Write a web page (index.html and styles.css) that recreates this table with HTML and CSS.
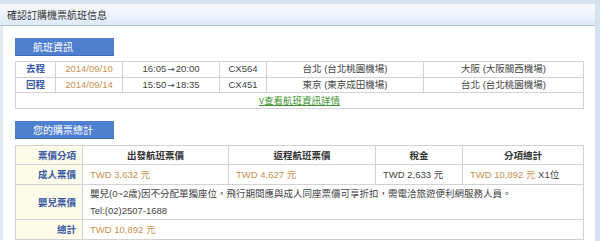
FILE: index.html
```html
<!DOCTYPE html>
<html lang="zh-TW">
<head>
<meta charset="utf-8">
<link rel="stylesheet" href="styles.css">
</head>
<body>
<div class="panel">
  <div class="panel-head">確認訂購機票航班信息</div>
  <div class="panel-body">
    <div class="tab">航班資訊</div>
    <table class="grid flights">
      <colgroup><col class="c1"><col class="c2"><col class="c3"><col class="c4"><col class="c5"><col class="c6"></colgroup>
      <tr>
        <td class="lbl">去程</td><td class="tan">2014/09/10</td><td>16:05<span class="arr">→</span>20:00</td><td>CX564</td><td>台北 (台北桃園機場)</td><td>大阪 (大阪關西機場)</td>
      </tr>
      <tr>
        <td class="lbl">回程</td><td class="tan">2014/09/14</td><td>15:50<span class="arr">→</span>18:35</td><td>CX451</td><td>東京 (東京成田機場)</td><td>台北 (台北桃園機場)</td>
      </tr>
      <tr class="linkrow"><td colspan="6"><a href="#" class="more">v查看航班資訊詳情</a></td></tr>
    </table>
    <div class="tab tab2">您的購票總計</div>
    <table class="grid prices">
      <colgroup><col class="p1"><col class="p2"><col class="p3"><col class="p4"><col class="p5"></colgroup>
      <tr class="hrow">
        <td class="side">票價分項</td><th>出發航班票價</th><th>返程航班票價</th><th>稅金</th><th>分項總計</th>
      </tr>
      <tr class="prow">
        <td class="side">成人票價</td><td class="tan">TWD 3,632 元</td><td class="tan">TWD 4,627 元</td><td>TWD 2,633 元</td><td><span class="tan">TWD 10,892 元</span> X1位</td>
      </tr>
      <tr class="irow">
        <td class="side">嬰兒票價</td>
        <td colspan="4" class="note">嬰兒(0~2歲)因不分配單獨座位<span class="cjk">，</span>飛行期間應與成人同座票價可享折扣<span class="cjk">，</span>需電洽旅遊便利網服務人員<span class="cjk">。</span><br>Tel:(02)2507-1688</td>
      </tr>
      <tr class="prow">
        <td class="side">總計</td><td colspan="4" class="tan">TWD 10,892 元</td>
      </tr>
    </table>
  </div>
</div>
</body>
</html>
```

FILE: styles.css
```css
html, body {
  margin: 0;
  padding: 0;
}
body {
  background: #d6e3ee;
  font-family: "Liberation Sans", "Noto Sans CJK TC", sans-serif;
  font-size: 9.5px;
  color: #444;
  height: 241px;
  overflow: hidden;
}
.panel {
  margin-top: 4px;
  width: 595px;
  background: #fff;
  height: 237px;
}
.panel-head {
  height: 22px;
  line-height: 20px;
  padding-left: 7px;
  font-size: 10px;
  color: #333;
  background: linear-gradient(#f8fbff, #dde9f8);
  border-bottom: 1px solid #b4c0cc;
  border-top: 1px solid #eef4fb;
  box-sizing: border-box;
  font-family: "Noto Sans CJK TC", sans-serif;
}
.panel-body {
  border-left: 3px solid #e2eaf2;
  padding: 12px 12px 0 12px;
}
.tab {
  width: 99px;
  height: 18px;
  line-height: 18px;
  padding-left: 18px;
  background: #4f80cf;
  border-bottom: 1px solid #3e6cb8;
  box-sizing: border-box;
  color: #fff;
  font-size: 10px;
  font-family: "Noto Sans CJK TC", sans-serif;
  margin-bottom: 5px;
}
.tab2 {
  margin-top: 12px;
  margin-bottom: 6px;
}
.grid {
  border-collapse: collapse;
  table-layout: fixed;
  width: 568px;
  border: 1px solid #c9c9c9;
}
.grid td, .grid th {
  border: 1px solid #d2d2d2;
  padding: 0;
  white-space: nowrap;
  overflow: hidden;
}
.c1 { width: 40px; }
.c2 { width: 67px; }
.c3 { width: 97px; }
.c4 { width: 47px; }
.c5 { width: 157px; }
.c6 { width: 160px; }
.flights tr { height: 15.5px; }
.flights td {
  text-align: center;
  color: #444;
  line-height: 14px;
}
.arr {
  font-family: "DejaVu Sans", sans-serif;
  font-size: 9px;
  margin: 0 1px;
}
.cjk {
  font-family: "Noto Sans CJK TC", sans-serif;
}
.flights .lbl {
  color: #3a5aa5;
  font-weight: bold;
}
.tan { color: #c8914f; }
.flights td.tan { color: #c8914f; }
.linkrow { height: 16px; }
.more {
  color: #3f952f;
  text-decoration: underline;
  font-family: "Noto Sans CJK TC", sans-serif;
}
.p1 { width: 67px; }
.p2 { width: 146px; }
.p3 { width: 147px; }
.p4 { width: 87px; }
.p5 { width: 121px; }
.prices td, .prices th {
  padding: 0 7px;
  text-align: left;
  line-height: 17px;
}
.hrow { height: 19px; }
.prow { height: 20px; }
.irow { height: 35px; }
.prices th {
  text-align: center;
  font-weight: bold;
  color: #333;
}
.prices td.side {
  background: #fdfbe9;
  color: #3a5aa5;
  font-weight: bold;
  text-align: right;
  padding: 0 6px 0 0;
}
.note {
  color: #444;
}
```
